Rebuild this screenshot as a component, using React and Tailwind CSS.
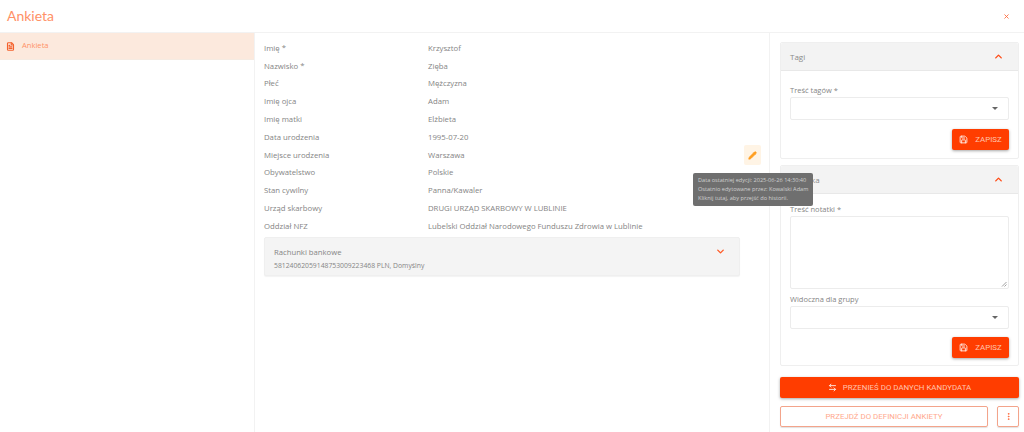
import { ChevronDown, ChevronUp, X, Pencil, ArrowLeftRight, MoreVertical, Save, FileText } from "lucide-react";

const pola = [
  ["Imię *", "Krzysztof"],
  ["Nazwisko *", "Zięba"],
  ["Płeć", "Mężczyzna"],
  ["Imię ojca", "Adam"],
  ["Imię matki", "Elżbieta"],
  ["Data urodzenia", "1995-07-20"],
  ["Miejsce urodzenia", "Warszawa"],
  ["Obywatelstwo", "Polskie"],
  ["Stan cywilny", "Panna/Kawaler"],
  ["Urząd skarbowy", "DRUGI URZĄD SKARBOWY W LUBLINIE"],
  ["Oddział NFZ", "Lubelski Oddział Narodowego Funduszu Zdrowia w Lublinie"],
];

function Zapisz() {
  return (
    <button
      type="button"
      className="flex h-[21px] w-[57px] items-center justify-center gap-[7px] rounded-[2px] bg-[#ff3d00] font-['Roboto',sans-serif] text-[7.9px] text-[#ffc4ae] shadow-[0_1px_3px_rgba(0,0,0,0.35)]"
    >
      <Save className="h-[9px] w-[9px] text-[#ffe9e0]" strokeWidth={2.5} />
      ZAPISZ
    </button>
  );
}

function Select() {
  return (
    <div className="flex h-[23px] items-center justify-end rounded-[2px] border border-[#ececec] bg-white pr-[10px]">
      <span className="h-0 w-0 border-x-[3px] border-t-[3px] border-x-transparent border-t-[#666]" />
    </div>
  );
}

function PanelHeader({ title }) {
  return (
    <div className="flex h-[28px] items-center justify-between rounded-t-[2px] border-b border-[#e8e8e8] bg-[#f3f3f3] pl-[9px] pr-[14px] text-[8px] text-[#8a8a8a]">
      {title}
      <ChevronUp className="h-[11px] w-[11px] text-[#ff4a14]" strokeWidth={3} />
    </div>
  );
}

export default function App() {
  return (
    <div className="relative flex h-[432px] w-[1024px] flex-col overflow-hidden bg-white font-['Open_Sans',sans-serif]">
      <header className="flex h-[33px] shrink-0 items-center justify-between border-b border-[#f2f2f2] pl-[7px] pr-[14px]">
        <h1 className="font-['Lato',sans-serif] text-[14px] leading-none text-[#ff9166]">Ankieta</h1>
        <X className="h-[7px] w-[7px] text-[#ff6a3c]" strokeWidth={3} />
      </header>

      <div className="flex min-h-0 flex-1">
        <aside className="w-[255px] shrink-0 border-r border-[#f2f2f2]">
          <div className="flex h-[27px] items-center gap-[7px] border-b border-[#f5ebe2] bg-[#fce9dd] pl-[6px] text-[7.6px] text-[#ff9166]">
            <FileText className="h-[9px] w-[9px] text-[#f4622e]" strokeWidth={3} />
            Ankieta
          </div>
        </aside>

        <main className="relative w-[515px] shrink-0 border-r border-[#f2f2f2] pl-[9px] pt-[6px]">
          <div className="flex flex-col">
            {pola.map(([label, value]) => (
              <div key={label} className="flex h-[17.8px] items-center pt-[1.5px] text-[7.75px] text-[#858585]">
                <span className="w-[164px] shrink-0">{label}</span>
                <span>{value}</span>
              </div>
            ))}
          </div>

          <div className="mt-[2px] flex h-[39px] w-[476px] justify-between rounded-[2px] border border-[#efefef] bg-[#f4f4f4] pl-[9px] pr-[13px] pt-[8px] shadow-[0_1px_1px_rgba(0,0,0,0.05)]">
            <div>
              <p className="text-[7.7px] leading-[12px] text-[#858585]">Rachunki bankowe</p>
              <p className="mt-[3px] text-[6.8px] leading-[10px] text-[#858585]">58124062059148753009223468 PLN, Domyślny</p>
            </div>
            <ChevronDown className="h-[11px] w-[11px] text-[#ff5a26]" strokeWidth={3} />
          </div>

          <button
            type="button"
            className="absolute left-[489px] top-[112px] flex h-[20px] w-[17px] items-center justify-center rounded-[2px] bg-[#fff4e5]"
          >
            <Pencil className="h-[9px] w-[9px] fill-[#ff9d1e] text-[#ff9d1e]" strokeWidth={2} />
          </button>
        </main>

        <section className="flex w-[254px] flex-col gap-[6px] pl-[10px] pr-[5px] pt-[9px]">
          <div className="h-[117px] rounded-[2px] border border-[#efefef]">
            <PanelHeader title="Tagi" />
            <div className="px-[9px] pt-[13px]">
              <p className="mb-[1px] text-[7.5px] leading-[12px] text-[#858585]">Treść tagów *</p>
              <Select />
              <div className="mt-[9px] flex justify-end">
                <Zapisz />
              </div>
            </div>
          </div>

          <div className="h-[201px] rounded-[2px] border border-[#efefef]">
            <PanelHeader title="Notatka" />
            <div className="px-[9px] pt-[9px]">
              <p className="mb-[1px] text-[7.5px] leading-[12px] text-[#858585]">Treść notatki *</p>
              <div className="relative h-[73px] rounded-[2px] border border-[#ececec]">
                <svg className="absolute bottom-[1px] right-[1px] h-[6px] w-[6px]" viewBox="0 0 6 6">
                  <path d="M1 5.5 5.5 1M3.5 5.5l2-2" stroke="#888" strokeWidth="0.8" fill="none" />
                </svg>
              </div>
              <p className="mb-[1px] mt-[4px] text-[7.5px] leading-[12px] text-[#858585]">Widoczna dla grupy</p>
              <Select />
              <div className="mt-[8px] flex justify-end">
                <Zapisz />
              </div>
            </div>
          </div>

          <button
            type="button"
            className="mt-[5px] flex h-[21px] items-center justify-center gap-[6px] rounded-[2px] bg-[#ff3d00] font-['Roboto',sans-serif] text-[7.9px] text-[#ffc4ae] shadow-[0_1px_3px_rgba(0,0,0,0.35)]"
          >
            <ArrowLeftRight className="h-[9px] w-[9px] text-[#ffe9e0]" strokeWidth={2.5} />
            PRZENIEŚ DO DANYCH KANDYDATA
          </button>

          <div className="mt-[2px] flex gap-[9px]">
            <button
              type="button"
              className="h-[21px] w-[208px] rounded-[2px] border-[1.5px] border-[#f3a48b] font-['Roboto',sans-serif] text-[7.9px] text-[#ffa98d] shadow-[0_1px_1px_rgba(0,0,0,0.12)]"
            >
              PRZEJDŹ DO DEFINICJI ANKIETY
            </button>
            <button
              type="button"
              className="flex h-[21px] w-[22px] items-center justify-center rounded-[2px] border-[1.5px] border-[#f3a48b] shadow-[0_1px_1px_rgba(0,0,0,0.12)]"
            >
              <MoreVertical className="h-[9px] w-[9px] text-[#ff6a3c]" strokeWidth={2.5} />
            </button>
          </div>
        </section>
      </div>

      <div className="absolute left-[693px] top-[173px] h-[33px] w-[120px] rounded-[2px] bg-[#6f6f6f] px-[5px] py-[3px] text-[5.6px] leading-[9px] whitespace-nowrap text-[#cfcfcf]">
        <p>Data ostatniej edycji: 2025-06-26 14:30:40</p>
        <p>Ostatnio edytowane przez: Kowalski Adam</p>
        <p>Kliknij tutaj, aby przejść do historii.</p>
      </div>
    </div>
  );
}
